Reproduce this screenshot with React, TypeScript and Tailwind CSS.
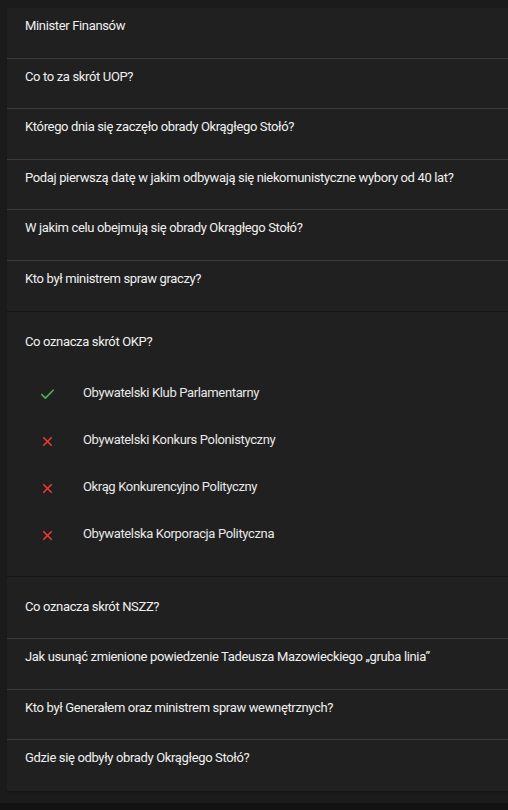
import { Check, X } from 'lucide-react';

const topQuestions = [
  'Minister Finansów',
  'Co to za skrót UOP?',
  'Którego dnia się zaczęło obrady Okrągłego Stołó?',
  'Podaj pierwszą datę w jakim odbywają się niekomunistyczne wybory od 40 lat?',
  'W jakim celu obejmują się obrady Okrągłego Stołó?',
  'Kto był ministrem spraw graczy?',
];

const bottomQuestions = [
  'Jak usunąć zmienione powiedzenie Tadeusza Mazowieckiego „gruba linia”',
  'Kto był Generałem oraz ministrem spraw wewnętrznych?',
  'Gdzie się odbyły obrady Okrągłego Stołó?',
];

const answers = [
  { text: 'Obywatelski Klub Parlamentarny', correct: true },
  { text: 'Obywatelski Konkurs Polonistyczny', correct: false },
  { text: 'Okrąg Konkurencyjno Polityczny', correct: false },
  { text: 'Obywatelska Korporacja Polityczna', correct: false },
];

function QuestionRow({ text, last, tall }: { text: string; last?: boolean; tall?: boolean }) {
  return (
    <div
      className={`box-border ${tall ? 'h-[62px] pt-5' : 'h-[50.5px] pt-2'} pl-[18px] ${
        last ? '' : 'border-b border-[#3a3a3a]'
      }`}>
      <p className="text-[13px] leading-5 text-[#f0f0f0] tracking-[-0.35px]">{text}</p>
    </div>
  );
}

export default function App() {
  return (
    <div className="min-h-screen bg-[#121212]" style={{ fontFamily: 'Roboto, "Noto Sans", sans-serif' }}>
      <div className="overflow-x-hidden bg-[#1b1b1b] pt-2 pb-3">
        <div className="ml-[7px] mr-[-10px] bg-[#202020] shadow-[0_1px_1px_rgba(0,0,0,0.25)]">
          {topQuestions.map((q, i) => (
            <QuestionRow key={q} text={q} last={i === topQuestions.length - 1} />
          ))}
        </div>

        <div className="ml-[7px] mr-[-10px] mt-px bg-[#202020] shadow-[0_1px_1px_rgba(0,0,0,0.25)]">
          <div className="pl-[18px] pt-5 pb-[17px]">
            <p className="text-[13px] leading-5 text-[#f0f0f0] tracking-[-0.35px]">Co oznacza skrót OKP?</p>
          </div>
          <ul className="pb-[19px]">
            {answers.map((a) => (
              <li key={a.text} className="flex h-[47px] items-center">
                <span className="flex w-[76px] justify-start">
                  {a.correct ? (
                    <Check size={17} strokeWidth={2.4} className="ml-[32px] mt-[4px] text-[#4caf50]" />
                  ) : (
                    <X size={15} strokeWidth={2.8} className="ml-[33px] mt-[4px] text-[#e53935]" />
                  )}
                </span>
                <span className="text-[13px] leading-5 text-[#e8e8e8] tracking-[-0.35px]">{a.text}</span>
              </li>
            ))}
          </ul>
        </div>

        <div className="ml-[7px] mr-[-10px] mt-px bg-[#202020] shadow-[0_1px_1px_rgba(0,0,0,0.25)]">
          <QuestionRow text="Co oznacza skrót NSZZ?" tall />
          {bottomQuestions.map((q, i) => (
            <QuestionRow key={q} text={q} last={i === bottomQuestions.length - 1} />
          ))}
        </div>
      </div>
    </div>
  );
}
